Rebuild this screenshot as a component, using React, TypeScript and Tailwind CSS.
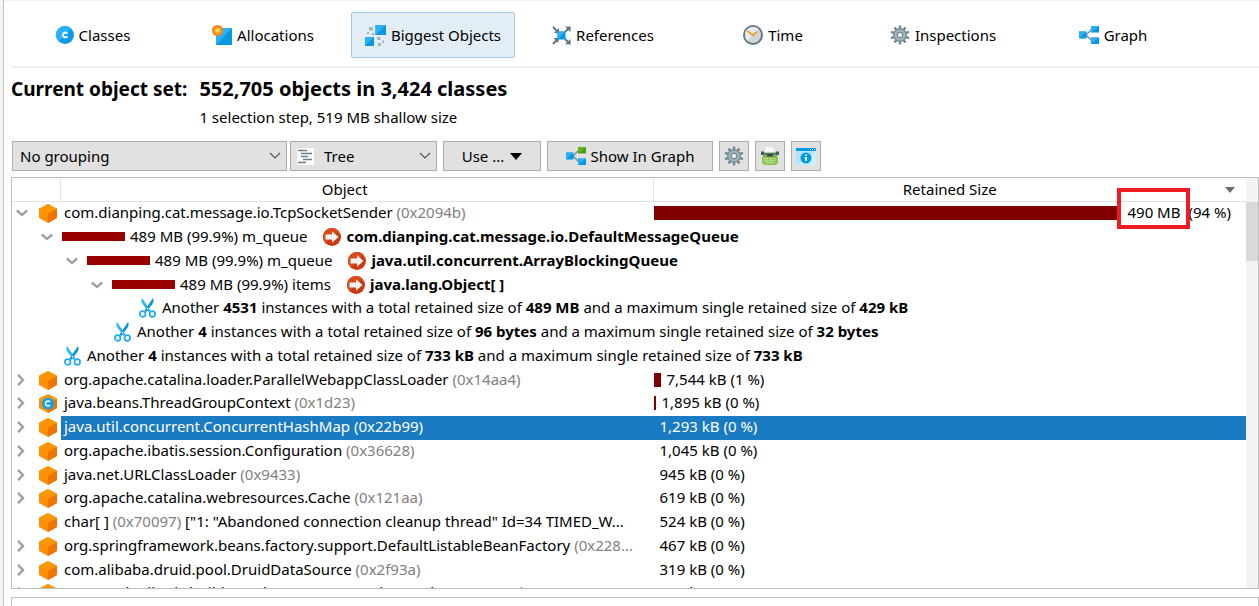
import React from "react";

function ClassIcon() {
  return (
    <svg viewBox="0 0 18 18" className="size-[18px]" aria-hidden="true">
      <circle cx="9" cy="9" r="9" fill="#0a9be8" />
      <path d="M2.600 15.400A9 9 0 0 1 15.400 2.600Z" fill="#29b1f5" />
      <path d="M11.400 7.700A2.400 2.400 0 1 0 11.400 10.300" fill="none" stroke="#fff" strokeWidth="2" />
    </svg>
  );
}

function AllocationsIcon() {
  return (
    <svg viewBox="0 0 20 20" className="size-5" aria-hidden="true">
      <path d="M4 3h16v17H4z" fill="#0598e3" />
      <path d="M4 3h16L4 20z" fill="#2ab0f3" />
      <circle cx="5.500" cy="5.500" r="5.500" fill="#fb8114" />
      <circle cx="5.500" cy="5.500" r="3.300" fill="#ffb52a" />
      <circle cx="5.500" cy="5.500" r="1.600" fill="#ffe27a" />
    </svg>
  );
}

function BiggestIcon() {
  return (
    <svg viewBox="0 0 21 21" className="size-[21px]" aria-hidden="true">
      <path d="M10.500 0H21v10H10.500z" fill="#0d97e0" />
      <path d="M10.500 0H21L10.500 10z" fill="#2ab0f3" />
      <path d="M0 12h9v9H0z" fill="#0d97e0" />
      <path d="M0 12h9l-9 9z" fill="#2ab0f3" />
      <path
        d="M4 2h4v3.500H4zM2 7h2v2H2zM7 8h2.500v2H7zM12 12h3.500v3H12zM17 15.500h2v2.500h-2zM13 18h3v3h-3z"
        fill="#a3b5be"
      />
    </svg>
  );
}

function ReferencesIcon() {
  return (
    <svg viewBox="0 0 19 19" className="size-[19px]" aria-hidden="true">
      <g stroke="#5c727d" strokeWidth="1.800" fill="none">
        <path d="M1 1l5 5M18 1l-5 5M1 18l5-5M18 18l-5-5" />
      </g>
      <path d="M7 2v5H2zM13 .800h5.500V6zM6.500 17v-5h-5zM13 18.200h5.500V13z" fill="#5c727d" />
      <path d="M5.500 5.500h8v8h-8z" fill="#0598e3" />
      <path d="M5.500 5.500h8l-8 8z" fill="#2ab0f3" />
    </svg>
  );
}

function TimeIcon() {
  return (
    <svg viewBox="0 0 20 20" className="size-5" aria-hidden="true">
      <circle cx="10" cy="10" r="9" fill="#d0d6d9" stroke="#647985" strokeWidth="2" />
      <path d="M4.300 15.700A8 8 0 0 1 15.700 4.300z" fill="#e6eaec" />
      <path d="M4.500 6l5.500 4.500 4-4" fill="none" stroke="#fb8c00" strokeWidth="1.600" />
    </svg>
  );
}

function GearIcon() {
  return (
    <svg viewBox="0 0 20 20" className="size-5" aria-hidden="true">
      <g stroke="#6f8794" strokeWidth="2.400">
        <path d="M10 .500v19M1 6.900l18 6.200M1 13.100l18-6.200M4.600 2.500l10.800 15M15.400 2.500l-10.800 15" />
      </g>
      <circle cx="10" cy="10" r="7" fill="#78909c" />
      <circle cx="10" cy="10" r="4.500" fill="none" stroke="#a3b4bc" strokeWidth="2.200" />
      <circle cx="10" cy="10" r="2.600" fill="#f3f5f6" stroke="#607b88" strokeWidth=".8" />
    </svg>
  );
}

function GraphIcon({ green = false }: { green?: boolean }) {
  return (
    <svg viewBox="0 0 20 18" className="h-[18px] w-5" aria-hidden="true">
      <path d="M13 3L7 9l6 6" fill="none" stroke="#71848e" strokeWidth="1.300" />
      <path d="M0 5.500h7.500v7H0zM12 11.500h8V18h-8z" fill="#0598e3" />
      <path d="M0 5.500h7.500L0 12.500zM12 11.500h8L12 18z" fill="#2ab0f3" />
      <path d="M12 0h8v6.500h-8z" fill={green ? "#4c9a17" : "#0598e3"} />
      <path d="M12 0h8l-8 6.500z" fill={green ? "#68b41f" : "#2ab0f3"} />
    </svg>
  );
}

function TypewriterIcon() {
  return (
    <svg viewBox="0 0 20 20" className="size-5" aria-hidden="true">
      <path d="M5.500 1H12l2 2v5H5.500z" fill="#f5f5f5" />
      <path d="M4 6.500h12L17.500 12h-15z" fill="#7fae45" />
      <path d="M1 5.500h3v3.500H1zM16 5.500h3v3.500h-3z" fill="#455a64" />
      <path d="M4 7h12v1.500H4z" fill="#546e7a" />
      <path d="M7 8h6v2.500H7z" fill="#37474f" />
      <path d="M2 11h16v4q0 4-4 4H6q-4 0-4-4z" fill="#8bc34a" />
      <path d="M4 12.800h12M4.500 14.800h11M6 16.800h8" stroke="#e4f2d3" strokeWidth="1" strokeDasharray="1.500 1" />
    </svg>
  );
}

function InfoWindowIcon() {
  return (
    <svg viewBox="0 0 20 17" className="h-[17px] w-5" aria-hidden="true">
      <path d="M0 0h20v17H0z" fill="#b3e2fb" />
      <path d="M0 17L20 3v14z" fill="#cdeefd" />
      <path d="M0 0h20v3H0z" fill="#039be5" />
      <path d="M14 1h1v1h-1zM16 1h1v1h-1zM18 1h1v1h-1z" fill="#fff" />
      <circle cx="10" cy="10" r="5.500" fill="#039be5" />
      <path d="M9.200 6.500h1.800v1.500H9.200zM8.500 9h2.500v4H9.200v-3h-.7z" fill="#fff" />
    </svg>
  );
}

function TreeIcon() {
  return (
    <svg viewBox="0 0 17 17" className="size-[17px] bg-white" aria-hidden="true">
      <path
        d="M1 2.500h9M4 5.500h11M4 8.500h7M6 11.500h9M1 14.500h8"
        stroke="#66808c"
        strokeWidth="1.300"
        fill="none"
      />
    </svg>
  );
}

function CubeIcon({ withClass = false }: { withClass?: boolean }) {
  return (
    <svg viewBox="0 0 18 19" className="h-[19px] w-[18px] shrink-0" aria-hidden="true">
      <path d="M9 0l9 4.700v9.300l-9 5-9-5V4.700z" fill="#ff8f05" />
      <path d="M9 9.500l9-4.800v9.300l-9 5z" fill="#f17400" />
      <path d="M9 0l9 4.700-9 4.800L0 4.700z" fill="#ff9800" />
      {withClass && (
        <>
          <circle cx="9" cy="9.500" r="6" fill="#0fa0ea" />
          <path d="M11.100 8.100A2.500 2.500 0 1 0 11.100 10.900" fill="none" stroke="#fff" strokeWidth="1.600" />
        </>
      )}
    </svg>
  );
}

function ReferenceArrow() {
  return (
    <svg viewBox="0 0 18 18" className="size-[18px] shrink-0" aria-hidden="true">
      <circle cx="9" cy="9" r="9" fill="#cb3a12" />
      <path d="M2.600 15.400A9 9 0 0 1 15.400 2.600z" fill="#db4a1b" />
      <path d="M2.500 6.500H9V3.300L15.500 9 9 14.700v-3.200H2.500z" fill="#f5f3f2" />
    </svg>
  );
}

function ScissorsIcon() {
  return (
    <svg viewBox="0 0 17 20" className="h-5 w-[17px] shrink-0" aria-hidden="true">
      <path d="M3 0C1.800 2.400 2.600 4.600 4 6.500L9.800 14l1.700-1.500z" fill="#29b6f6" />
      <path d="M14 0c1.200 2.400.4 4.600-1 6.500L7.200 14l-1.700-1.500z" fill="#0b93dc" />
      <circle cx="3.700" cy="16" r="2.800" fill="none" stroke="#22a9ee" strokeWidth="1.700" />
      <circle cx="13.300" cy="16" r="2.800" fill="none" stroke="#22a9ee" strokeWidth="1.700" />
      <circle cx="8.500" cy="10.600" r=".8" fill="#fff" />
    </svg>
  );
}

function Chevron({ open = false }: { open?: boolean }) {
  return (
    <svg viewBox="0 0 12 12" className="size-3" aria-hidden="true">
      <path
        d={open ? "M.800 3.500L6 8l5.200-4.500" : "M2 .800L7 6l-5 5.200"}
        fill="none"
        stroke="#a0a0a0"
        strokeWidth="2.400"
      />
    </svg>
  );
}

function SelectArrow() {
  return (
    <svg
      viewBox="0 0 12 8"
      className="pointer-events-none absolute top-1/2 right-[6px] h-2 w-3 -translate-y-1/2"
      aria-hidden="true"
    >
      <path d="M1 1l5 5 5-5" fill="none" stroke="#555" strokeWidth="1.200" />
    </svg>
  );
}

const tabs = [
  { label: "Classes", icon: <ClassIcon /> },
  { label: "Allocations", icon: <AllocationsIcon /> },
  { label: "Biggest Objects", icon: <BiggestIcon />, active: true },
  { label: "References", icon: <ReferencesIcon /> },
  { label: "Time", icon: <TimeIcon /> },
  { label: "Inspections", icon: <GearIcon /> },
  { label: "Graph", icon: <GraphIcon /> },
];

const controlClass = "h-[30px] border border-[#adadad] bg-[#e1e1e1]";

const rowClass = "h-6 nth-[4n]:h-[23px]";

function Expander({ open = false }: { open?: boolean }) {
  return (
    <button type="button" aria-label={open ? "Collapse" : "Expand"} className="shrink-0">
      <Chevron open={open} />
    </button>
  );
}

type ObjectRowProps = {
  name: string;
  id: string;
  detail?: string;
  size: string;
  bar?: React.ReactNode;
  leaf?: boolean;
  classObject?: boolean;
  selected?: boolean;
};

function ObjectRow({ name, id, detail, size, bar, leaf, classObject, selected }: ObjectRowProps) {
  const cell = selected ? "bg-[#1a7bc3] p-0 text-white" : "p-0";
  return (
    <tr className={rowClass}>
      <td className="p-0 align-top">
        <div className="flex h-[22px] items-center justify-between px-1">
          {leaf ? <span /> : <Expander />}
          <CubeIcon withClass={classObject} />
        </div>
      </td>
      <td className={`${cell} align-top`}>
        <div className="truncate pl-[3px] leading-[21px]">
          {name} <span className={selected ? "text-white" : "text-[#808080]"}>{id}</span>
          {detail && ` ${detail}`}
        </div>
      </td>
      <td className={`${cell} align-top`}>
        <div className="flex items-center gap-[6px] leading-[21px]">
          {bar ?? <span />}
          <span>{size}</span>
        </div>
      </td>
    </tr>
  );
}

function ReferenceRow({ indent, field, target }: { indent: string; field: string; target: string }) {
  return (
    <tr className={rowClass}>
      <td colSpan={3} className="p-0 align-top">
        <div className={`flex items-center whitespace-nowrap leading-[21px] ${indent}`}>
          <Expander open />
          <span className="ml-[9px] h-[9px] w-[63px] bg-[#990000]" />
          <span className="ml-[5px]">
            489 MB (99.9%) {field}
          </span>
          <span className="mr-[5px] ml-4">
            <ReferenceArrow />
          </span>
          <b>{target}</b>
        </div>
      </td>
    </tr>
  );
}

type RestRowProps = { indent: string; count: string; total: string; max: string };

function RestRow({ indent, count, total, max }: RestRowProps) {
  return (
    <tr className={rowClass}>
      <td colSpan={3} className="p-0 align-top">
        <div className={`flex items-center gap-[6px] whitespace-nowrap leading-[21px] ${indent}`}>
          <ScissorsIcon />
          <span>
            Another <b>{count}</b> instances with a total retained size of <b>{total}</b> and a maximum single
            retained size of <b>{max}</b>
          </span>
        </div>
      </td>
    </tr>
  );
}

export default function App() {
  return (
    <div className="flex h-screen overflow-hidden bg-white font-['Noto_Sans','Open_Sans',sans-serif] text-[15px] text-black">
      <div className="w-1 shrink-0 border-r border-[#c4c4c4] bg-[#f3f3f3]" />
      <main className="flex min-w-0 flex-1 flex-col border-t border-[#f0f0f0] pl-[7px]">
        <nav className="flex shrink-0 gap-[6px] border-b-2 border-[#f0f0f0] pt-[11px] pb-2">
          {tabs.map((tab) => (
            <button
              key={tab.label}
              type="button"
              className={
                tab.active
                  ? "flex h-[46px] w-[164px] items-center justify-center gap-[5px] rounded-[2px] border border-[#a3c9e3] bg-[#e3edf6] whitespace-nowrap"
                  : "flex h-[46px] w-[164px] items-center justify-center gap-[5px] whitespace-nowrap"
              }
            >
              {tab.icon}
              {tab.label}
            </button>
          ))}
        </nav>

        <header className="grid shrink-0 grid-cols-[auto_1fr] items-baseline gap-x-3 pt-[7px]">
          <h1 className="text-[19px] leading-7 font-bold">Current object set:</h1>
          <p className="text-[20px] leading-7 font-bold">552,705 objects in 3,424 classes</p>
          <p className="col-start-2 leading-7">1 selection step, 519 MB shallow size</p>
        </header>

        <div className="flex shrink-0 gap-[6px] pt-[10px] pb-[6px] pl-px">
          <div className="flex gap-[3px]">
            <div className="relative">
              <select
                aria-label="Grouping"
                className={`${controlClass} w-[275px] appearance-none pr-6 pl-[7px]`}
              >
                <option>No grouping</option>
              </select>
              <SelectArrow />
            </div>
            <div className="relative">
              <span className="pointer-events-none absolute top-[7px] left-[7px]">
                <TreeIcon />
              </span>
              <select aria-label="View" className={`${controlClass} w-[147px] appearance-none pr-6 pl-[33px]`}>
                <option>Tree</option>
              </select>
              <SelectArrow />
            </div>
          </div>
          <button type="button" className={`${controlClass} flex w-[98px] items-center justify-center gap-[6px]`}>
            Use ...
            <svg viewBox="0 0 12 7" className="h-[7px] w-3" aria-hidden="true">
              <path d="M0 0h12L6 7z" />
            </svg>
          </button>
          <button type="button" className={`${controlClass} flex w-[166px] items-center justify-center gap-[5px]`}>
            <GraphIcon green />
            Show In Graph
          </button>
          <button
            type="button"
            aria-label="Settings"
            className={`${controlClass} flex w-[30px] items-center justify-center`}
          >
            <GearIcon />
          </button>
          <button
            type="button"
            aria-label="Script"
            className={`${controlClass} flex w-[30px] items-center justify-center`}
          >
            <TypewriterIcon />
          </button>
          <button
            type="button"
            aria-label="Information"
            className={`${controlClass} flex w-[30px] items-center justify-center`}
          >
            <InfoWindowIcon />
          </button>
        </div>

        <section className="flex min-h-0 flex-1 border border-[#bdbdbd]">
          <div className="min-w-0 flex-1 overflow-hidden">
            <table className="w-full table-fixed border-separate border-spacing-0">
              <colgroup>
                <col className="w-[49px]" />
                <col />
                <col />
              </colgroup>
              <thead>
                <tr className="h-6">
                  <th className="border-r border-b border-[#e2e2e2] p-0" aria-label="Type" />
                  <th className="border-r border-b border-[#e2e2e2] p-0 pr-6 leading-[23px] font-normal">Object</th>
                  <th className="border-b border-[#e2e2e2] p-0 font-normal">
                    <div className="relative leading-[23px]">
                      Retained Size
                      <svg
                        viewBox="0 0 10 6"
                        className="absolute top-[9px] right-[11px] h-[6px] w-[10px]"
                        aria-hidden="true"
                      >
                        <path d="M0 0h10L5 6z" fill="#6d6d6d" />
                      </svg>
                    </div>
                  </th>
                </tr>
              </thead>
              <tbody>
                <tr className={rowClass}>
                  <td className="p-0 align-top">
                    <div className="flex h-[22px] items-center justify-between px-1">
                      <Expander open />
                      <CubeIcon />
                    </div>
                  </td>
                  <td className="p-0 align-top">
                    <div className="truncate pl-[3px] leading-[21px]">
                      com.dianping.cat.message.io.TcpSocketSender <span className="text-[#808080]">(0x2094b)</span>
                    </div>
                  </td>
                  <td className="p-0 align-top">
                    <div className="flex items-center pr-[15px] leading-[21px] whitespace-nowrap">
                      <span className="mr-[9px] h-[14px] flex-1 bg-[#800000]" />
                      <span className="relative">
                        490 MB
                        <span className="absolute -inset-x-[10px] -top-[14px] h-[41px] border-4 border-[#ed1c24]" />
                      </span>
                      <span className="ml-2">(94 %)</span>
                    </div>
                  </td>
                </tr>
                <ReferenceRow
                  indent="pl-[29px]"
                  field="m_queue"
                  target="com.dianping.cat.message.io.DefaultMessageQueue"
                />
                <ReferenceRow indent="pl-[54px]" field="m_queue" target="java.util.concurrent.ArrayBlockingQueue" />
                <ReferenceRow indent="pl-[79px]" field="items" target="java.lang.Object[ ]" />
                <RestRow indent="pl-[127px]" count="4531" total="489 MB" max="429 kB" />
                <RestRow indent="pl-[102px]" count="4" total="96 bytes" max="32 bytes" />
                <RestRow indent="pl-[52px]" count="4" total="733 kB" max="733 kB" />
                <ObjectRow
                  name="org.apache.catalina.loader.ParallelWebappClassLoader"
                  id="(0x14aa4)"
                  size="7,544 kB (1 %)"
                  bar={<span className="h-[14px] w-[7px] bg-[#800000]" />}
                />
                <ObjectRow
                  name="java.beans.ThreadGroupContext"
                  id="(0x1d23)"
                  size="1,895 kB (0 %)"
                  classObject
                  bar={<span className="h-[14px] w-[2px] bg-[#800000]" />}
                />
                <ObjectRow
                  name="java.util.concurrent.ConcurrentHashMap"
                  id="(0x22b99)"
                  size="1,293 kB (0 %)"
                  selected
                />
                <ObjectRow name="org.apache.ibatis.session.Configuration" id="(0x36628)" size="1,045 kB (0 %)" />
                <ObjectRow name="java.net.URLClassLoader" id="(0x9433)" size="945 kB (0 %)" />
                <ObjectRow name="org.apache.catalina.webresources.Cache" id="(0x121aa)" size="619 kB (0 %)" />
                <ObjectRow
                  name="char[ ]"
                  id="(0x70097)"
                  detail={'["1: "Abandoned connection cleanup thread" Id=34 TIMED_W...'}
                  size="524 kB (0 %)"
                  leaf
                />
                <ObjectRow
                  name="org.springframework.beans.factory.support.DefaultListableBeanFactory"
                  id="(0x228..."
                  size="467 kB (0 %)"
                />
                <ObjectRow name="com.alibaba.druid.pool.DruidDataSource" id="(0x2f93a)" size="319 kB (0 %)" />
                <ObjectRow
                  name="org.apache.ibatis.builder.xml.XMLMapperEntityResolver"
                  id="(0x11c2d)"
                  size="301 kB (0 %)"
                />
              </tbody>
            </table>
          </div>
          <div className="w-3 shrink-0 bg-[#f3f3f3] pt-6">
            <div className="h-[59px] bg-[#d9d9d9]" />
          </div>
        </section>
        <section className="mt-2 h-[9px] shrink-0 border border-b-0 border-[#bdbdbd]" />
      </main>
    </div>
  );
}
